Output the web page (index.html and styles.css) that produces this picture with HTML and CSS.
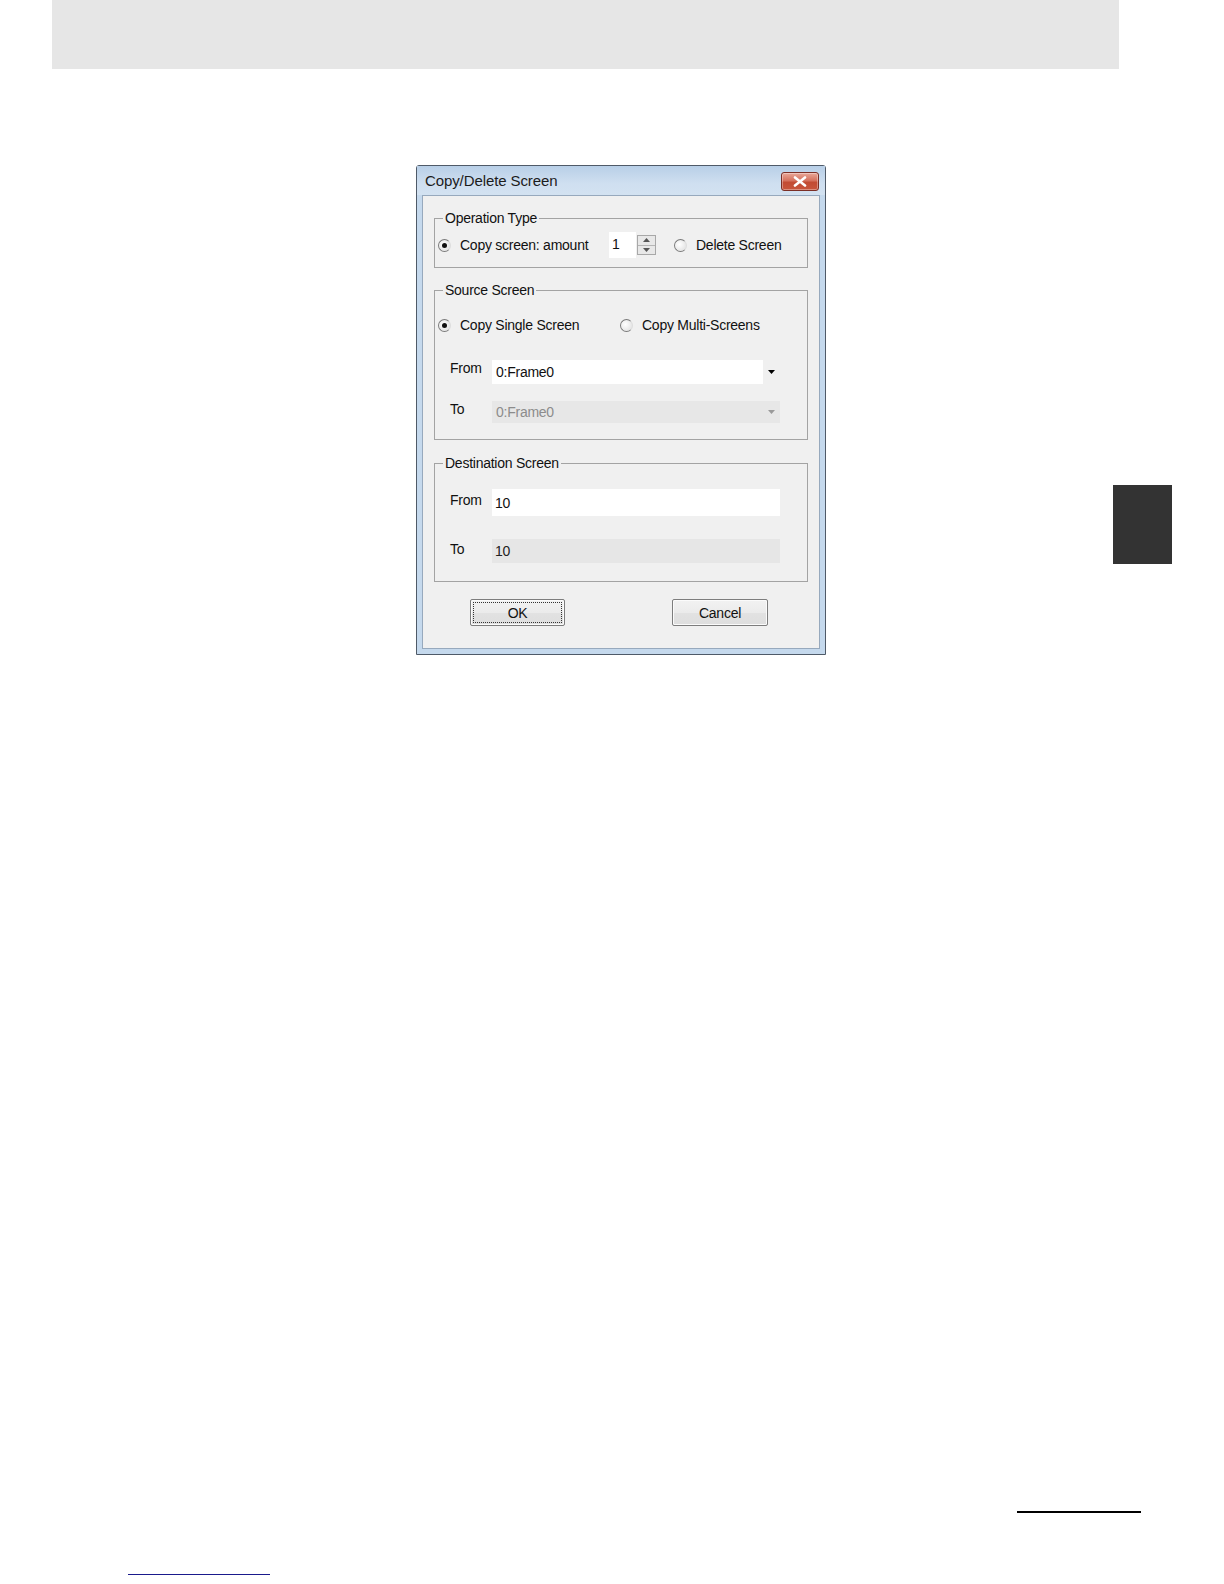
FILE: index.html
```html
<!DOCTYPE html>
<html lang="en">
<head>
<meta charset="utf-8">
<title>Copy/Delete Screen</title>
<link rel="stylesheet" href="styles.css">
</head>
<body>
<div class="page">
  <div class="topbar"></div>

  <div class="main-row">
    <div class="dialog">
      <div class="titlebar">
        <span class="title">Copy/Delete Screen</span>
        <span class="close">
          <svg width="14" height="11" viewBox="0 0 14 11">
            <path d="M2 1.5 L12 9.5 M12 1.5 L2 9.5" stroke="#ffffff" stroke-width="2.6" stroke-linecap="round" fill="none"/>
          </svg>
        </span>
      </div>
      <div class="body">
        <fieldset class="group g1">
          <legend>Operation Type</legend>
          <div class="row op-row">
            <span class="radio checked"></span>
            <span class="rlabel amount">Copy screen: amount</span>
            <span class="spinner">
              <span class="spin-field">1</span>
              <span class="spin-btns">
                <span class="spin-up"><svg width="7" height="4" viewBox="0 0 7 4"><path d="M0 4 L3.5 0 L7 4Z" fill="#555"/></svg></span>
                <span class="spin-dn"><svg width="7" height="4" viewBox="0 0 7 4"><path d="M0 0 L3.5 4 L7 0Z" fill="#555"/></svg></span>
              </span>
            </span>
            <span class="radio"></span>
            <span class="rlabel">Delete Screen</span>
          </div>
        </fieldset>

        <fieldset class="group g2">
          <legend>Source Screen</legend>
          <div class="row src-row">
            <span class="radio checked"></span>
            <span class="rlabel single">Copy Single Screen</span>
            <span class="radio"></span>
            <span class="rlabel">Copy Multi-Screens</span>
          </div>
          <div class="frow combo-from">
            <span class="flabel">From</span>
            <span class="combo">
              <span class="combo-text">0:Frame0</span>
              <span class="combo-arrow"><svg width="7" height="4" viewBox="0 0 7 4"><path d="M0 0 L3.5 4 L7 0Z" fill="#000"/></svg></span>
            </span>
          </div>
          <div class="frow combo-to">
            <span class="flabel">To</span>
            <span class="combo disabled">
              <span class="combo-text">0:Frame0</span>
              <span class="combo-arrow"><svg width="7" height="4" viewBox="0 0 7 4"><path d="M0 0 L3.5 4 L7 0Z" fill="#9a9a9a"/></svg></span>
            </span>
          </div>
        </fieldset>

        <fieldset class="group g3">
          <legend>Destination Screen</legend>
          <div class="frow dest-from">
            <span class="flabel">From</span>
            <span class="field">10</span>
          </div>
          <div class="frow dest-to">
            <span class="flabel">To</span>
            <span class="field disabled">10</span>
          </div>
        </fieldset>

        <div class="buttons">
          <span class="btn ok"><span class="focus">OK</span></span>
          <span class="btn cancel">Cancel</span>
        </div>
      </div>
    </div>

    <div class="side-tab"></div>
  </div>

  <div class="footer-rule"></div>
  <div class="footer-link"></div>
</div>
</body>
</html>
```

FILE: styles.css
```css
html, body {
  margin: 0;
  padding: 0;
  background: #ffffff;
}

.page {
  width: 1224px;
  height: 1584px;
  overflow: hidden;
  font-family: "Liberation Sans", Arial, sans-serif;
  font-size: 14px;
  letter-spacing: -0.25px;
  color: #111;
}

.topbar {
  margin-left: 52px;
  width: 1067px;
  height: 69px;
  background: #e6e6e6;
}

.main-row {
  display: flex;
  align-items: flex-start;
  margin-top: 96px;
  padding-left: 416px;
}

/* ---------- dialog window ---------- */
.dialog {
  box-sizing: border-box;
  width: 410px;
  height: 490px;
  border: 1px solid #4f5a68;
  border-radius: 3px 3px 0 0;
  background: #c5d9ed;
  padding: 0 5px 5px;
  display: flex;
  flex-direction: column;
}

.titlebar {
  height: 29px;
  flex: none;
  display: flex;
  align-items: center;
  justify-content: space-between;
  background: linear-gradient(#b8cfe7, #cfdff0 60%, #d3e2f1);
  margin: 0 -5px;
  padding-left: 8px;
  padding-right: 6px;
}

.title {
  font-size: 15px;
  letter-spacing: -0.1px;
  color: #1c1c1c;
}

.close {
  box-sizing: border-box;
  width: 38px;
  height: 19px;
  margin-top: 2px;
  border: 1px solid #7b2f26;
  border-radius: 3px;
  background: linear-gradient(#e9a899, #d5715d 45%, #c24b33 55%, #c8553c);
  display: flex;
  align-items: center;
  justify-content: center;
  box-shadow: inset 0 0 0 1px rgba(255,255,255,0.35);
}

.close svg {
  display: block;
}

.body {
  flex: 1;
  background: #f0f0f0;
  border: 1px solid #97a9bd;
  padding: 14px 11px 0 11px;
}

/* ---------- group boxes ---------- */
.group {
  margin: 0;
  padding: 0;
  border: 1px solid #a3a3a3;
  min-width: 0;
}

.group legend {
  margin-left: 5px;
  padding: 0 2px;
  line-height: 16px;
  height: 16px;
  color: #111;
}

.g1 { padding: 6px 0 9px 3px; }
.g2 { margin-top: 14px; padding: 19px 27px 16px 3px; }
.g3 { margin-top: 15px; padding: 18px 27px 18px 3px; }

.row {
  display: flex;
  align-items: center;
}

.op-row { height: 26px; }
.src-row { height: 16px; }

.radio {
  box-sizing: border-box;
  width: 13px;
  height: 13px;
  border-radius: 50%;
  border: 1px solid #7a7a7a;
  border-right-color: #dcdcdc;
  background: radial-gradient(circle at 40% 40%, #ffffff, #e6e6e6 70%);
  position: relative;
  flex: none;
}

.radio.checked::after {
  content: "";
  position: absolute;
  left: 3px;
  top: 3px;
  width: 5px;
  height: 5px;
  border-radius: 50%;
  background: #111;
}

.rlabel {
  margin-left: 9px;
  white-space: nowrap;
}

.rlabel.amount { width: 149px; flex: none; }
.rlabel.single { width: 160px; flex: none; }

.spinner {
  display: flex;
  align-items: center;
  margin-right: 18px;
}

.spin-field {
  box-sizing: border-box;
  width: 27px;
  height: 26px;
  background: #ffffff;
  padding-left: 3px;
  line-height: 24px;
}

.spin-btns {
  box-sizing: border-box;
  width: 19px;
  height: 20px;
  margin-left: 1px;
  border: 1px solid #a8a8a8;
  background: #e8e8e8;
  display: flex;
  flex-direction: column;
}

.spin-up, .spin-dn {
  flex: 1;
  display: flex;
  align-items: center;
  justify-content: center;
}

.spin-up { border-bottom: 1px solid #b5b5b5; }

.spin-btns svg { display: block; }

/* ---------- label/field rows ---------- */
.frow {
  display: flex;
  align-items: flex-start;
  padding-left: 12px;
}

.combo-from { margin-top: 27px; }
.combo-to { margin-top: 17px; }
.dest-to { margin-top: 23px; }

.flabel {
  width: 42px;
  flex: none;
  line-height: 16px;
}

.dest-from .flabel { margin-top: 3px; }
.dest-to .flabel { margin-top: 2px; }

.combo {
  flex: 1;
  height: 24px;
  display: flex;
  align-items: center;
}

.combo-to .combo { height: 22px; }

.combo-text {
  flex: 1;
  align-self: stretch;
  background: #ffffff;
  padding-left: 4px;
  display: flex;
  align-items: center;
}

.combo-arrow {
  width: 17px;
  flex: none;
  display: flex;
  align-items: center;
  justify-content: center;
}

.combo-arrow svg { display: block; }

.combo.disabled {
  background: #e7e7e7;
  color: #8c8c8c;
}

.combo.disabled .combo-text {
  background: transparent;
}

.field {
  flex: 1;
  box-sizing: border-box;
  height: 27px;
  background: #ffffff;
  padding-left: 3px;
  display: flex;
  align-items: center;
}

.field.disabled {
  height: 24px;
  background: #e6e6e6;
  color: #222;
}

/* ---------- buttons ---------- */
.buttons {
  display: flex;
  margin-top: 17px;
  padding-left: 36px;
  gap: 107px;
}

.btn {
  box-sizing: border-box;
  height: 27px;
  border: 1px solid #7d7d7d;
  border-radius: 2px;
  background: linear-gradient(#f2f2f2, #ebebeb 50%, #e2e2e2 51%, #dedede);
  display: flex;
  align-items: center;
  justify-content: center;
  box-shadow: inset 0 0 0 1px #fbfbfb;
}

.btn.ok { width: 95px; padding: 2px; }
.btn.cancel { width: 96px; }

.focus {
  box-sizing: border-box;
  width: 100%;
  height: 100%;
  border: 1px dotted #333;
  display: flex;
  align-items: center;
  justify-content: center;
}

/* ---------- page decorations ---------- */
.side-tab {
  flex: none;
  margin-left: 287px;
  margin-top: 320px;
  width: 59px;
  height: 79px;
  background: #333333;
}

.footer-rule {
  margin-top: 856px;
  margin-left: 1017px;
  width: 124px;
  height: 2px;
  background: #000000;
}

.footer-link {
  margin-top: 61px;
  margin-left: 128px;
  width: 142px;
  height: 1px;
  background: #1a1a8c;
}
```
